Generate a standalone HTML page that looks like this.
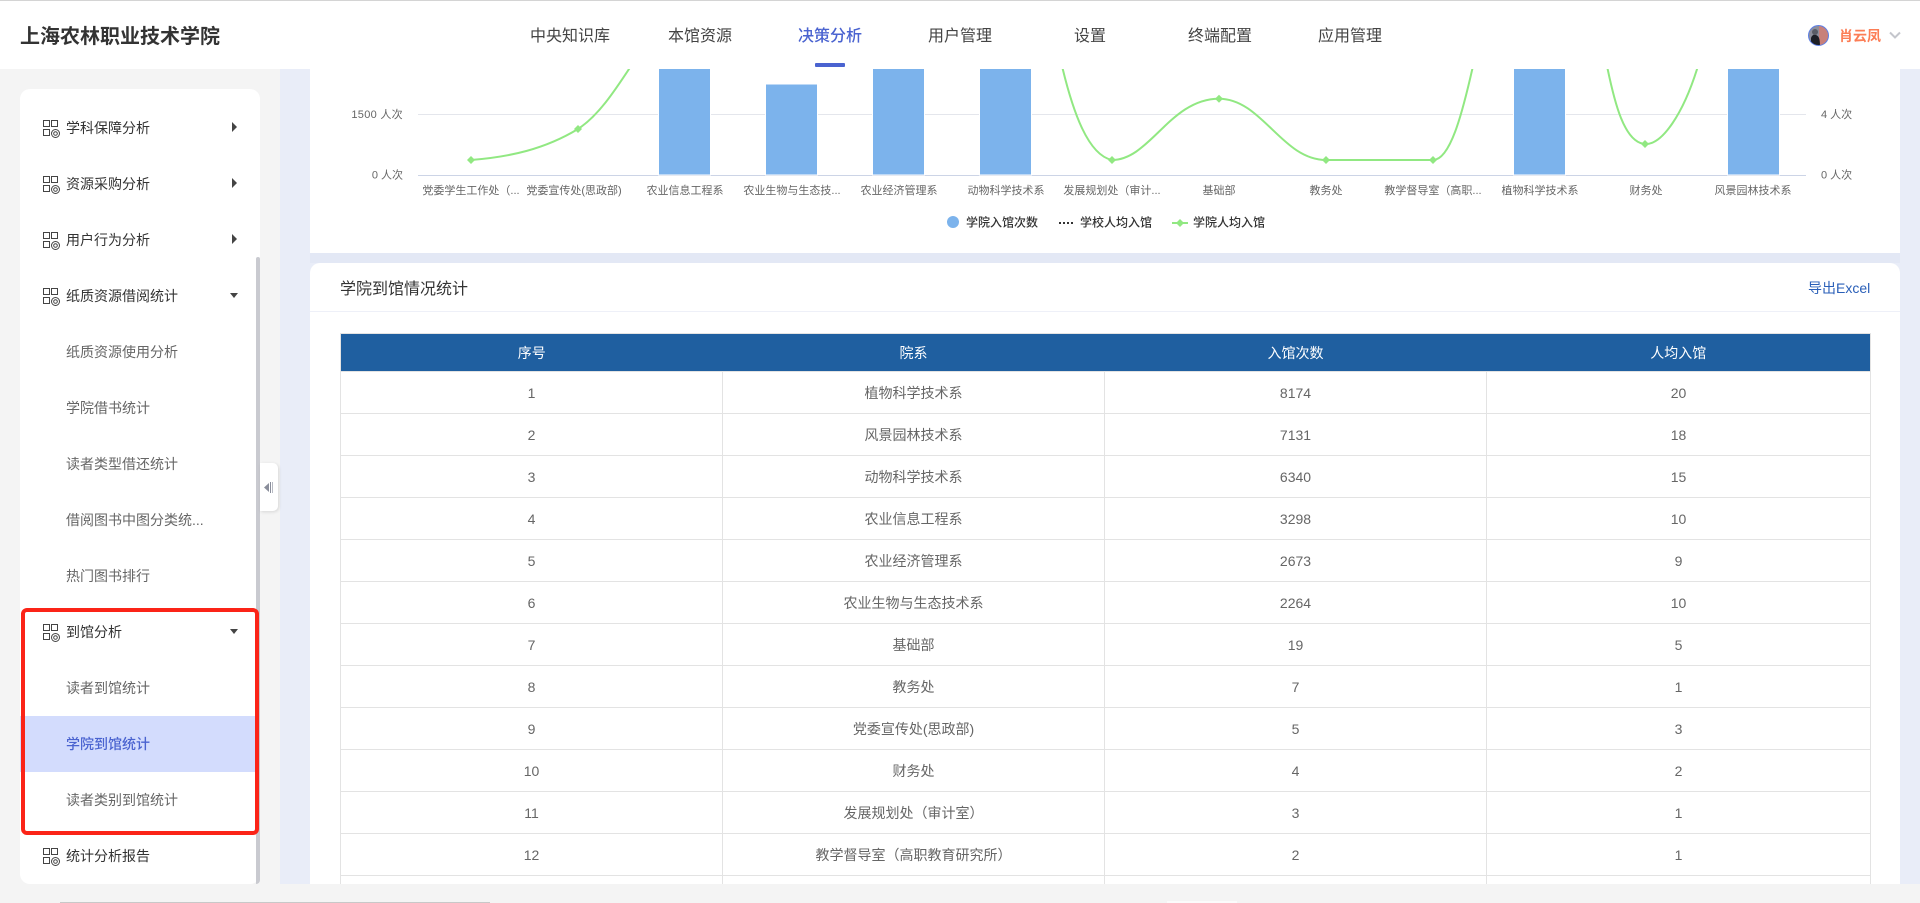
<!DOCTYPE html>
<html lang="zh-CN">
<head>
<meta charset="utf-8">
<title>学院到馆统计</title>
<style>
*{box-sizing:border-box;margin:0;padding:0}
html,body{width:1920px;height:903px;overflow:hidden;background:#f4f4f4}
body{position:relative;font-family:"Liberation Sans","Noto Sans CJK SC",sans-serif;color:#333}
.abs{position:absolute}
#top{left:0;top:0;width:1920px;height:69px;background:#fff;border-top:1px solid #d4d4d4;z-index:5}
.brand{position:absolute;left:20px;top:21px;font-size:20px;line-height:30px;font-weight:700;color:#333;white-space:nowrap}
.nav{position:absolute;top:21px;font-size:16px;line-height:30px;color:#444;white-space:nowrap}
.nav.on{color:#4a63d0;font-weight:500}
#bar{left:815px;top:63px;width:30px;height:4px;background:#4a63d0;z-index:6;border-radius:1px}
.uname{position:absolute;left:1839px;top:20px;font-size:14px;line-height:30px;color:#fc7d55;font-weight:700;white-space:nowrap}
#side{left:20px;top:89px;width:240px;height:795px;background:#fff;border-radius:10px;overflow:hidden}
#thumb{left:256px;top:257px;width:4px;height:627px;background:#c9cad0;border-radius:2px 2px 4px 0;z-index:3}
.it{position:absolute;left:66px;font-size:14px;line-height:24px;height:24px;white-space:nowrap;z-index:2}
.m{color:#333}
.s{color:#666}
.ic{position:absolute;left:42px;z-index:2}
.ca{position:absolute;z-index:2}
#hl{left:20px;top:716px;width:236px;height:56px;background:#d3dcfd;z-index:1}
#red{left:21px;top:608px;width:238px;height:227px;border:4px solid #fb2418;border-radius:6px;z-index:4}
#handle{left:260px;top:463px;width:18px;height:48px;background:#fff;border-radius:0 5px 5px 0;box-shadow:1px 1px 3px rgba(0,0,0,.12);z-index:3}
#main{left:280px;top:69px;width:1640px;height:815px;background:#e9edf8;overflow:hidden}
#gap{left:30px;top:184px;width:1590px;height:10px;background:#e3e8f5}
#c1{left:30px;top:0;width:1590px;height:184px;background:#fff;overflow:hidden}
#c2{left:30px;top:194px;width:1590px;height:621px;background:#fff;border-radius:10px 10px 0 0;overflow:hidden}
#hd{position:absolute;left:0;top:0;width:1590px;height:49px;border-bottom:1px solid #eef0f8}
.ti{position:absolute;left:30px;top:12px;font-size:16px;line-height:30px;color:#333;white-space:nowrap}
.ex{position:absolute;left:1498px;top:11px;font-size:14px;line-height:28px;color:#2a5fb8;white-space:nowrap}
table{position:absolute;left:30px;top:70px;width:1530px;border-collapse:collapse;table-layout:fixed;font-size:14px;border:1px solid #e3e3e3;border-bottom:0}
th{height:38px;background:#1f5fa0;color:#fff;font-weight:400;text-align:center;padding:0}
td{height:42px;border:1px solid #e3e3e3;color:#666;text-align:center;padding:0}
tr.last td{height:9px;border-bottom:0;font-size:0;line-height:0}
svg text{font-family:"Liberation Sans","Noto Sans CJK SC",sans-serif}
#btm{left:60px;top:902px;width:430px;height:1px;background:#c8c8c8}
</style>
</head>
<body>

<div class="abs" id="top">
  <div class="brand">上海农林职业技术学院</div>
  <div class="nav" style="left:530px">中央知识库</div>
  <div class="nav" style="left:668px">本馆资源</div>
  <div class="nav on" style="left:798px">决策分析</div>
  <div class="nav" style="left:928px">用户管理</div>
  <div class="nav" style="left:1074px">设置</div>
  <div class="nav" style="left:1188px">终端配置</div>
  <div class="nav" style="left:1318px">应用管理</div>
  <svg class="abs" style="left:1808px;top:24px" width="21" height="21" viewBox="0 0 21 21">
    <defs><clipPath id="av"><circle cx="10.5" cy="10.5" r="10"/></clipPath></defs>
    <g clip-path="url(#av)">
      <rect width="21" height="21" fill="#8d8f9c"/>
      <rect x="11" width="10" height="21" fill="#c8807a"/>
      <path d="M3 21V13c1-3 3-4 5-3 3 1 4 4 4 11z" fill="#1d1f26"/>
      <circle cx="7" cy="7" r="3" fill="#5a5c66"/>
    </g>
    <circle cx="10.5" cy="10.5" r="10" fill="none" stroke="#5d7fe6" stroke-width="1"/>
  </svg>
  <div class="uname">肖云凤</div>
  <svg class="abs" style="left:1889px;top:30px" width="12" height="9" viewBox="0 0 12 9"><path d="M1 1.5l5 5 5-5" fill="none" stroke="#c4c6cc" stroke-width="2"/></svg>
</div>
<div class="abs" id="bar"></div>

<div class="abs" id="side"></div>
<div class="abs" id="thumb"></div>
<div class="abs" id="hl"></div>

<svg width="0" height="0" style="position:absolute">
  <defs>
    <g id="gi" fill="none" stroke="#444" stroke-width="1">
      <rect x="1.500" y=".5" width="6" height="6"/>
      <rect x="9.500" y=".5" width="6" height="6"/>
      <rect x="1.500" y="9.500" width="6" height="6"/>
      <circle cx="13.500" cy="13.500" r="4"/>
      <circle cx="13.500" cy="13.500" r="1.800"/>
    </g>
  </defs>
</svg>

<svg class="ic" style="top:120px" width="18" height="18"><use href="#gi"/></svg>
<div class="it m" style="top:116px">学科保障分析</div>
<svg class="ca" style="left:231px;top:122px" width="7" height="10"><path d="M1 0l5 5-5 5z" fill="#444"/></svg>

<svg class="ic" style="top:176px" width="18" height="18"><use href="#gi"/></svg>
<div class="it m" style="top:172px">资源采购分析</div>
<svg class="ca" style="left:231px;top:178px" width="7" height="10"><path d="M1 0l5 5-5 5z" fill="#444"/></svg>

<svg class="ic" style="top:232px" width="18" height="18"><use href="#gi"/></svg>
<div class="it m" style="top:228px">用户行为分析</div>
<svg class="ca" style="left:231px;top:234px" width="7" height="10"><path d="M1 0l5 5-5 5z" fill="#444"/></svg>

<svg class="ic" style="top:288px" width="18" height="18"><use href="#gi"/></svg>
<div class="it m" style="top:284px">纸质资源借阅统计</div>
<svg class="ca" style="left:230px;top:293px" width="9" height="6"><path d="M0 0h8l-4 5z" fill="#444"/></svg>

<div class="it s" style="top:340px">纸质资源使用分析</div>
<div class="it s" style="top:396px">学院借书统计</div>
<div class="it s" style="top:452px">读者类型借还统计</div>
<div class="it s" style="top:508px">借阅图书中图分类统...</div>
<div class="it s" style="top:564px">热门图书排行</div>

<svg class="ic" style="top:624px" width="18" height="18"><use href="#gi"/></svg>
<div class="it m" style="top:620px">到馆分析</div>
<svg class="ca" style="left:230px;top:629px" width="9" height="6"><path d="M0 0h8l-4 5z" fill="#444"/></svg>

<div class="it s" style="top:676px">读者到馆统计</div>
<div class="it" style="top:732px;color:#4a63d0;font-weight:500">学院到馆统计</div>
<div class="it s" style="top:788px">读者类别到馆统计</div>

<svg class="ic" style="top:848px" width="18" height="18"><use href="#gi"/></svg>
<div class="it m" style="top:844px">统计分析报告</div>

<div class="abs" id="red"></div>

<div class="abs" id="handle">
  <svg class="abs" style="left:4px;top:19px" width="10" height="11" viewBox="0 0 10 11">
    <path d="M0 5.500L5 1v9z" fill="#8a8e9b"/>
    <rect x="6" y="0" width="1" height="11" fill="#8a8e9b"/>
    <rect x="8" y="0" width="1" height="11" fill="#b7bac3"/>
  </svg>
</div>

<div class="abs" id="main">
  <div class="abs" id="gap"></div>
  <div class="abs" id="c1">
    <svg class="abs" style="left:-310px;top:-69px" width="1920" height="253" viewBox="0 0 1920 253">
      <defs><clipPath id="cp"><rect x="310" y="69" width="1590" height="184"/></clipPath></defs>
      <g clip-path="url(#cp)">
        <line x1="418" y1="114.500" x2="1806" y2="114.500" stroke="#e4e6ec"/>
        <line x1="418" y1="175.500" x2="1806" y2="175.500" stroke="#ccd4e6"/>
        <g fill="#7cb3ec" stroke="#fff" stroke-width="1">
          <rect x="658.500" y="60" width="52" height="115"/>
          <rect x="765.500" y="84" width="52" height="91"/>
          <rect x="872.500" y="60" width="52" height="115"/>
          <rect x="979.500" y="60" width="52" height="115"/>
          <rect x="1513.500" y="60" width="52" height="115"/>
          <rect x="1727.500" y="60" width="52" height="115"/>
        </g>
        <g fill="none" stroke="#91e882" stroke-width="2">
          <path d="M471 160C510 157 545 149 578 129C598 116 614 92 631 66"/>
          <path d="M1062 66C1073 112 1088 155 1112 160C1150 160 1170 98.700 1219 98.700C1262 98.700 1282 160 1326 160L1433 160C1450 160 1462 115 1473 66"/>
          <path d="M1607 66C1614 100 1624 144 1646 144C1662 144 1683 115 1698 66"/>
        </g>
        <g fill="#91e882">
          <path d="M471 156l4 4-4 4-4-4z"/>
          <path d="M578 125l4 4-4 4-4-4z"/>
          <path d="M1112 156l4 4-4 4-4-4z"/>
          <path d="M1219 94.700l4 4-4 4-4-4z"/>
          <path d="M1326 156l4 4-4 4-4-4z"/>
          <path d="M1433 156l4 4-4 4-4-4z"/>
          <path d="M1645 140l4 4-4 4-4-4z"/>
        </g>
      </g>
      <g font-size="11" fill="#666" text-anchor="end">
        <text x="403" y="118" letter-spacing=".3">1500 人次</text>
        <text x="403" y="178.500">0 人次</text>
      </g>
      <g font-size="11" fill="#666">
        <text x="1821" y="118">4 人次</text>
        <text x="1821" y="178.500">0 人次</text>
      </g>
      <g font-size="11" fill="#666" text-anchor="middle">
        <text x="471" y="194">党委学生工作处（...</text>
        <text x="574" y="194">党委宣传处(思政部)</text>
        <text x="685" y="194">农业信息工程系</text>
        <text x="792" y="194">农业生物与生态技...</text>
        <text x="899" y="194">农业经济管理系</text>
        <text x="1006" y="194">动物科学技术系</text>
        <text x="1112" y="194">发展规划处（审计...</text>
        <text x="1219" y="194">基础部</text>
        <text x="1326" y="194">教务处</text>
        <text x="1433" y="194">教学督导室（高职...</text>
        <text x="1540" y="194">植物科学技术系</text>
        <text x="1646" y="194">财务处</text>
        <text x="1753" y="194">风景园林技术系</text>
      </g>
      <ellipse cx="953" cy="222" rx="6" ry="6" fill="#7cb3ec"/>
      <text x="966" y="226.500" font-size="12" fill="#333" font-weight="500">学院入馆次数</text>
      <path d="M1059 223h15" stroke="#333" stroke-width="2" stroke-dasharray="2 2"/>
      <text x="1080" y="226.500" font-size="12" fill="#333" font-weight="500">学校人均入馆</text>
      <path d="M1172 223h16" stroke="#91e882" stroke-width="2"/>
      <path d="M1180 219l4 4-4 4-4-4z" fill="#91e882"/>
      <text x="1193" y="226.500" font-size="12" fill="#333" font-weight="500">学院人均入馆</text>
    </svg>
  </div>
  <div class="abs" id="c2">
    <div id="hd">
      <div class="ti">学院到馆情况统计</div>
      <div class="ex">导出Excel</div>
    </div>
    <table>
      <colgroup><col style="width:382px"><col style="width:382px"><col style="width:382px"><col style="width:384px"></colgroup>
      <tr><th>序号</th><th>院系</th><th>入馆次数</th><th>人均入馆</th></tr>
      <tr><td>1</td><td>植物科学技术系</td><td>8174</td><td>20</td></tr>
      <tr><td>2</td><td>风景园林技术系</td><td>7131</td><td>18</td></tr>
      <tr><td>3</td><td>动物科学技术系</td><td>6340</td><td>15</td></tr>
      <tr><td>4</td><td>农业信息工程系</td><td>3298</td><td>10</td></tr>
      <tr><td>5</td><td>农业经济管理系</td><td>2673</td><td>9</td></tr>
      <tr><td>6</td><td>农业生物与生态技术系</td><td>2264</td><td>10</td></tr>
      <tr><td>7</td><td>基础部</td><td>19</td><td>5</td></tr>
      <tr><td>8</td><td>教务处</td><td>7</td><td>1</td></tr>
      <tr><td>9</td><td>党委宣传处(思政部)</td><td>5</td><td>3</td></tr>
      <tr><td>10</td><td>财务处</td><td>4</td><td>2</td></tr>
      <tr><td>11</td><td>发展规划处（审计室）</td><td>3</td><td>1</td></tr>
      <tr><td>12</td><td>教学督导室（高职教育研究所）</td><td>2</td><td>1</td></tr>
      <tr class="last"><td></td><td></td><td></td><td></td></tr>
    </table>
  </div>
</div>

<div class="abs" id="btm"></div>
<div class="abs" style="left:1167px;top:901px;width:70px;height:2px;background:#fbfbfb"></div>

</body>
</html>
